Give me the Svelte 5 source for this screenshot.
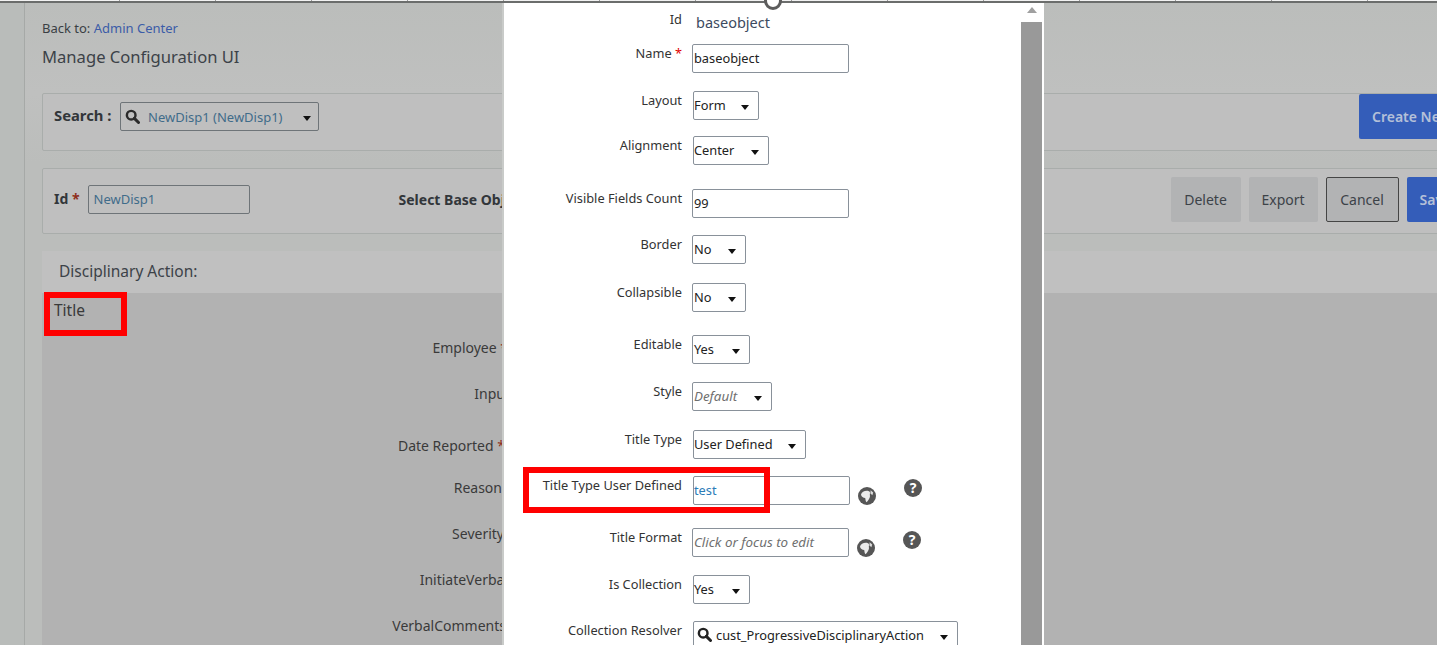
<script>
	const rows = [
		{ label: 'Name', req: true, kind: 'input', value: 'baseobject', top: 44, w: 157 },
		{ label: 'Layout', kind: 'select', value: 'Form', top: 91, w: 66, x: 1 },
		{ label: 'Alignment', kind: 'select', value: 'Center', top: 136, w: 76, x: 1 },
		{ label: 'Visible Fields Count', kind: 'input', value: '99', top: 189, w: 157 },
		{ label: 'Border', kind: 'select', value: 'No', top: 235, w: 54 },
		{ label: 'Collapsible', kind: 'select', value: 'No', top: 283, w: 54 },
		{ label: 'Editable', kind: 'select', value: 'Yes', top: 335, w: 58 },
		{ label: 'Style', kind: 'select', value: 'Default', top: 382, w: 80, hint: true },
		{ label: 'Title Type', kind: 'select', value: 'User Defined', top: 430, w: 113, x: 1 },
		{ label: 'Title Type User Defined', kind: 'input', value: 'test', top: 476, w: 157, x: 1, link: true, icons: true },
		{ label: 'Title Format', kind: 'input', value: 'Click or focus to edit', top: 528, w: 157, hint: true, icons: true },
		{ label: 'Is Collection', kind: 'select', value: 'Yes', top: 575, w: 57, x: 1 },
		{ label: 'Collection Resolver', kind: 'search', value: 'cust_ProgressiveDisciplinaryAction', top: 621, w: 265, x: 1 }
	];
	const heights = rows.map((r, i) => (rows[i + 1] ? rows[i + 1].top - r.top : 60));

	const fields = [
		{ label: 'Employee', req: true, h: 46, edge: 508 },
		{ label: 'Input', h: 52, edge: 510 },
		{ label: 'Date Reported', req: true, h: 42, edge: 505 },
		{ label: 'Reason', h: 46, edge: 502 },
		{ label: 'Severity', h: 46, edge: 504 },
		{ label: 'InitiateVerbal', h: 46, edge: 508 },
		{ label: 'VerbalComments', h: 46, edge: 506 }
	];
</script>

{#snippet lens()}
	<svg class="lens" viewBox="0 0 16 16" width="15" height="15">
		<circle cx="6.6" cy="6.6" r="4.6" fill="none" stroke="currentColor" stroke-width="2.6" />
		<path d="M10 10l4.4 4.4" stroke="currentColor" stroke-width="3.2" stroke-linecap="round" />
	</svg>
{/snippet}

<div class="page">
	<div class="ruler"></div>
	<div class="shell">
		<div class="strip"></div>
		<main class="main">
			<div class="back">Back to: <a href="#admin">Admin Center</a></div>
			<h1>Manage Configuration UI</h1>

			<section class="panel search-panel">
				<b class="search-label">Search :</b>
				<div class="search-box">
					{@render lens()}
					<span class="search-val">NewDisp1 (NewDisp1)</span>
					<i class="caret"></i>
				</div>
				<button class="btn primary create">Create New</button>
			</section>

			<section class="panel id-panel">
				<b class="id-label">Id <span class="star">*</span></b>
				<div class="id-input">NewDisp1</div>
				<b class="base-label">Select Base Object</b>
				<div class="actions">
					<button class="btn delete">Delete</button>
					<button class="btn export">Export</button>
					<button class="btn outlined">Cancel</button>
					<button class="btn primary save">Save</button>
				</div>
			</section>

			<section class="detail">
				<div class="detail-head">Disciplinary Action:</div>
				<div class="detail-body">
					<div class="detail-title">Title</div>
					{#each fields as f}
						<div class="field" style="height: {f.h}px; width: {f.edge - 42}px">
							{f.label}{#if f.req}<span class="star">&nbsp;*</span>{/if}
						</div>
					{/each}
				</div>
			</section>
		</main>
	</div>

	<div class="mark mark-title"></div>

	<div class="modal">
		<div class="handle"></div>
		<div class="modal-form">
			<div class="row id-row">
				<span class="row-label">Id</span>
				<span class="row-static">baseobject</span>
			</div>
			{#each rows as r, i}
				<div class="row" style="height: {heights[i]}px">
					<span class="row-label">
						{r.label}{#if r.req}<span class="req">&nbsp;*</span>{/if}
					</span>
					<div
						class="ctl"
						class:offset={r.x}
						class:hint={r.hint}
						class:link={r.link}
						style="width: {r.w}px"
					>
						{#if r.kind === 'search'}{@render lens()}{/if}
						<span class="ctl-val" class:with-lens={r.kind === 'search'}>{r.value}</span>
						{#if r.kind !== 'input'}<i class="caret"></i>{/if}
					</div>
					{#if r.icons}
						<svg class="globe" viewBox="0 0 18 18" width="18" height="18">
							<circle cx="9" cy="9" r="9" fill="#565656" />
							<path d="M3 7.6C3.6 4.8 6.8 3.4 9.8 3.8c1.8.3 2.6 1.6 2.1 3.2-.3 1 .4 1.8-.1 3.2-.6 1.8-1.6 3.4-3.2 5-1-.8-1.1-2.6-1.4-4.2-1.9 0-4-1.2-4.2-3.4z" fill="#ececec" />
							<path d="M12.6 3.2l2.6 2.2-.8 2.8-2-1.8z" fill="#dcdcdc" />
						</svg>
						<span class="help">?</span>
					{/if}
				</div>
			{/each}
		</div>
		<div class="scrollbar">
			<div class="scroll-up"></div>
			<div class="scroll-track"></div>
		</div>
	</div>

	<div class="mark mark-field"></div>
</div>

<style>
	:global(body) {
		margin: 0;
		background: #bcbebc;
	}

	.page {
		position: relative;
		width: 1437px;
		height: 645px;
		overflow: hidden;
		font-family: 'Noto Sans', 'Open Sans', sans-serif;
		font-size: 14px;
		color: #32363a;
	}

	.ruler {
		height: 3px;
		box-sizing: border-box;
		border-bottom: 2px solid #6b6d6c;
		background: repeating-linear-gradient(
			90deg,
			#f2f2f2 0,
			#f2f2f2 95px,
			#9a9a9a 95px,
			#9a9a9a 96px
		);
		background-position: 24px 0;
	}

	.shell {
		display: flex;
		height: 642px;
		background: #bbbdbb;
	}

	.strip {
		flex: none;
		width: 24px;
		border-right: 1px solid #a6a9a7;
		background: #b9bcba;
	}

	.main {
		flex: none;
		width: 1600px;
		padding: 15px 0 0 17px;
		background: linear-gradient(#bbbdbb, #bfc0bf 90px, #bbbdbb 160px);
	}

	.back {
		font-size: 13px;
		line-height: 20px;
		color: #3a3f44;
	}

	.back a {
		color: #3b5ca8;
		text-decoration: none;
	}

	h1 {
		margin: 7px 0 0;
		font-size: 16.6px;
		line-height: 24px;
		font-weight: 400;
		color: #3c4248;
	}

	.panel {
		display: flex;
		box-sizing: border-box;
		width: 1500px;
		border: 1px solid #a9adab;
		border-radius: 2px;
		background: #bfbfbf;
	}

	.search-panel {
		height: 58px;
		margin-top: 24px;
		padding-left: 11px;
		align-items: flex-start;
	}

	.search-label {
		width: 59px;
		margin-top: 12px;
		font-size: 14.8px;
		line-height: 18px;
		white-space: nowrap;
	}

	.search-box {
		position: relative;
		display: flex;
		align-items: center;
		box-sizing: border-box;
		width: 199px;
		height: 29px;
		margin: 8px 0 0 7px;
		padding-left: 4px;
		border: 1px solid #6e7478;
		border-radius: 2px;
		color: #2b2b2b;
	}

	.search-val {
		margin-left: 8px;
		font-size: 13px;
		color: #3f6c8a;
	}

	.search-box .caret {
		right: 7px;
	}

	.btn {
		flex: none;
		height: 45px;
		padding: 0;
		border: 1px solid transparent;
		border-radius: 2px;
		background: #b2b3b4;
		font: inherit;
		color: #3c4248;
	}

	.btn.primary {
		background: #345db9;
		color: #b4c0d8;
		font-weight: 600;
		text-align: left;
		padding-left: 12px;
	}

	.btn.outlined {
		width: 73px;
		border-color: #454545;
	}

	.delete {
		width: 70px;
	}

	.export {
		width: 69px;
	}

	.save {
		width: 80px;
	}

	.create {
		width: 120px;
		margin-left: 1040px;
	}

	.id-panel {
		height: 66px;
		margin-top: 17px;
		padding-left: 11px;
		align-items: flex-start;
	}

	.id-label {
		margin-top: 21px;
		line-height: 18px;
	}

	.star {
		color: #8f2f1d;
	}

	.id-input {
		box-sizing: border-box;
		width: 162px;
		height: 29px;
		margin: 16px 0 0 8px;
		padding-left: 5px;
		border: 1px solid #6e7478;
		border-radius: 2px;
		font-size: 13px;
		line-height: 27px;
		color: #3f6c8a;
	}

	.base-label {
		width: 400px;
		margin: 22px 0 0 149px;
		line-height: 18px;
		white-space: nowrap;
	}

	.actions {
		display: flex;
		gap: 8px;
		margin: 8px 0 0 372px;
	}

	.detail {
		width: 1500px;
		margin-top: 17px;
	}

	.detail-head {
		height: 42px;
		padding-left: 17px;
		font-size: 15.5px;
		line-height: 41px;
		color: #3c4248;
		background: #c0c0c0;
	}

	.detail-body {
		height: 360px;
		background: #b2b2b2;
	}

	.detail-title {
		height: 46px;
		padding: 7px 0 0 12px;
		box-sizing: border-box;
		font-size: 15.5px;
		line-height: 20px;
		color: #3a3a3a;
	}

	.field {
		text-align: right;
		line-height: 18px;
		white-space: nowrap;
		color: #3a3a3a;
	}

	.mark {
		position: absolute;
		box-sizing: border-box;
		border: 6px solid #ff0000;
	}

	.mark-title {
		left: 44px;
		top: 292px;
		width: 83px;
		height: 44px;
	}

	.mark-field {
		left: 523px;
		top: 467px;
		width: 247px;
		height: 46px;
	}

	.modal {
		position: absolute;
		left: 504px;
		top: 3px;
		display: flex;
		width: 540px;
		height: 642px;
		background: #fff;
		box-shadow: -2px 0 0 #c9cbc9;
	}

	.handle {
		position: absolute;
		left: 260px;
		top: -11px;
		width: 18px;
		height: 18px;
		box-sizing: border-box;
		border: 3px solid #5c5c5c;
		border-radius: 50%;
		background: #fff;
	}

	.modal-form {
		flex: none;
		width: 517px;
		color: #333;
	}

	.row {
		display: flex;
		align-items: flex-start;
	}

	.id-row {
		height: 41px;
	}

	.row-label {
		flex: none;
		box-sizing: border-box;
		width: 178px;
		text-align: right;
		font-size: 12.8px;
		line-height: 18px;
		white-space: nowrap;
	}

	.id-row .row-label {
		margin-top: 7px;
	}

	.req {
		color: #e00000;
	}

	.row-static {
		margin: 9px 0 0 14px;
		font-size: 14.5px;
		line-height: 20px;
		color: #3c4a60;
	}

	.ctl {
		position: relative;
		flex: none;
		display: flex;
		align-items: center;
		box-sizing: border-box;
		height: 29px;
		margin-left: 10px;
		padding: 0 0 2px 1px;
		border: 1px solid #89919a;
		border-radius: 2px;
		font-size: 12.8px;
		color: #222;
	}

	.ctl.offset {
		margin-left: 11px;
		padding-left: 0;
	}

	.ctl.hint .ctl-val {
		color: #6f6f6f;
		font-size: 13.4px;
		font-style: italic;
	}

	.ctl.link .ctl-val {
		color: #2b7cb8;
	}

	.ctl .lens {
		margin-left: 3px;
		color: #222;
	}

	.ctl-val.with-lens {
		margin-left: 4px;
	}

	.caret {
		position: absolute;
		right: 9px;
		top: 13px;
		width: 0;
		height: 0;
		border: 4px solid transparent;
		border-top: 5px solid #111;
		border-bottom: 0;
	}

	.globe {
		flex: none;
		margin: 11px 0 0 8px;
	}

	.help {
		flex: none;
		width: 18px;
		height: 18px;
		margin: 3px 0 0 28px;
		border-radius: 50%;
		background: #565656;
		color: #fff;
		font-size: 14px;
		font-weight: 700;
		line-height: 18px;
		text-align: center;
	}

	.scrollbar {
		flex: none;
		display: flex;
		flex-direction: column;
		width: 21px;
	}

	.scroll-up {
		flex: none;
		width: 0;
		height: 0;
		margin: 4px auto 9px;
		border: 5.5px solid transparent;
		border-bottom: 6px solid #a0a0a0;
		border-top: 0;
	}

	.scroll-track {
		flex: 1;
		background: #999;
	}
</style>
